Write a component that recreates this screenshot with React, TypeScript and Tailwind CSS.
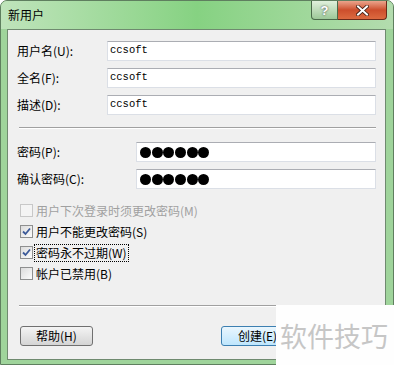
import React from 'react';

const cjk = { fontFamily: '"Noto Sans CJK SC", "Noto Sans", sans-serif' };
const mono = { fontFamily: '"Liberation Mono", "DejaVu Sans Mono", monospace' };

const TextRow: React.FC<{ label: string; value: string }> = ({ label, value }) => (
  <div className="flex items-center h-[20px]">
    <span className="w-[90px] text-[12px] text-black leading-none">{label}</span>
    <div className="flex-1 h-[20px] bg-white border border-[#dbdfe6] border-t-[#abadb3] flex items-center pl-[2px]">
      <span className="text-[10.5px] text-black" style={mono}>{value}</span>
    </div>
  </div>
);

const PassRow: React.FC<{ label: string }> = ({ label }) => (
  <div className="flex items-center h-[20px]">
    <span className="w-[119px] text-[12px] text-black leading-none">{label}</span>
    <div className="flex-1 h-[20px] bg-white border border-[#dbdfe6] border-t-[#abadb3] flex items-center pl-[3px] gap-[0.7px]">
      {[0, 1, 2, 3, 4, 5].map((i) => (
        <span key={i} className="w-[11px] h-[11px] rounded-full bg-black" />
      ))}
    </div>
  </div>
);

const Check: React.FC<{ label: string; checked?: boolean; disabled?: boolean; focus?: boolean }> = ({
  label,
  checked,
  disabled,
  focus,
}) => (
  <div className="flex items-center h-[21px] pl-[3px]">
    <div
      className={`w-[13px] h-[13px] border flex items-center justify-center ${
        disabled ? 'border-[#c8c8c8] bg-[#f4f4f4]' : 'border-[#8e8f8f] bg-gradient-to-br from-[#dcdcdc] to-[#fcfcfc]'
      }`}
    >
      {checked && (
        <svg width="9" height="9" viewBox="0 0 9 9">
          <path d="M1 4.5 L3.5 7 L8 1.5" stroke="#3c5a99" strokeWidth="1.8" fill="none" />
        </svg>
      )}
    </div>
    <span
      className={`ml-[2px] text-[12px] leading-none px-[1px] py-[2px] ${
        disabled ? 'text-[#a0a0a0]' : 'text-black'
      } ${focus ? 'outline outline-1 outline-dotted outline-black' : ''}`}
    >
      {label}
    </span>
  </div>
);

const Separator = () => (
  <div className="h-[2px] border-t border-[#a0a0a0] border-b border-b-white" />
);

export default function App() {
  return (
    <div className="relative w-[394px] h-[365px] bg-white overflow-hidden" style={cjk}>
      <div className="w-[394px] h-[365px] flex flex-col border border-[#5f7f5f] rounded-t-[7px] bg-[#9fd49b]">
        {/* Title bar */}
        <div className="h-[28px] flex items-start bg-gradient-to-r from-[#bfe4bb] via-[#86d282] to-[#b3dcae] rounded-t-[6px]">
          <span className="pl-[7px] pt-[5px] text-[12px] text-black">新用户</span>
          <div className="ml-auto mr-[6px] flex h-[19px]">
            <div className="w-[27px] h-[19px] border border-[#4a6a4a] border-t-0 rounded-bl-[4px] bg-gradient-to-b from-[#e0f0dc] to-[#9cc898] flex items-center justify-center">
              <span className="text-[13px] font-bold text-white leading-none" style={{ textShadow: '0 0 2px #333', fontFamily: 'Arial, "Liberation Sans", sans-serif' }}>?</span>
            </div>
            <div className="w-[49px] h-[19px] border border-[#6b2a1a] border-t-0 border-l-0 rounded-br-[4px] bg-gradient-to-b from-[#eaa48c] via-[#cc4e2c] to-[#dc6a40] flex items-center justify-center">
              <svg width="13" height="11" viewBox="0 0 13 11">
                <path d="M2 1.5 L11 9.5 M11 1.5 L2 9.5" stroke="#3a1a10" strokeWidth="3.6" strokeLinecap="square" />
                <path d="M2 1.5 L11 9.5 M11 1.5 L2 9.5" stroke="#ffffff" strokeWidth="2" strokeLinecap="square" />
              </svg>
            </div>
          </div>
        </div>

        {/* Client area */}
        <div className="ml-[6px] mr-[7px] mb-[4px] flex-1 border border-[#6f8a6f] bg-[#f0f0f0] px-[9px] flex flex-col">
          <div className="mt-[11px] flex flex-col gap-[7px]">
            <TextRow label="用户名(U):" value="ccsoft" />
            <TextRow label="全名(F):" value="ccsoft" />
            <TextRow label="描述(D):" value="ccsoft" />
          </div>
          <div className="mt-[12px] ml-[2px]">
            <Separator />
          </div>
          <div className="mt-[13px] flex flex-col gap-[7px]">
            <PassRow label="密码(P):" />
            <PassRow label="确认密码(C):" />
          </div>
          <div className="mt-[11px] flex flex-col">
            <Check label="用户下次登录时须更改密码(M)" disabled />
            <Check label="用户不能更改密码(S)" checked />
            <Check label="密码永不过期(W)" checked focus />
            <Check label="帐户已禁用(B)" />
          </div>
          <div className="mt-[21px] ml-[2px]">
            <Separator />
          </div>
          <div className="mt-[19px] flex items-center pl-[3px]">
            <button className="w-[73px] h-[20px] rounded-[3px] border border-[#707070] bg-gradient-to-b from-[#f4f4f4] to-[#d4d4d4] text-[12px] text-black leading-none">
              帮助(H)
            </button>
            <button className="ml-[128px] w-[73px] h-[20px] rounded-[3px] border border-[#3c7fb1] bg-gradient-to-b from-[#eaf6fd] to-[#bee6fd] text-[12px] text-black leading-none">
              创建(E)
            </button>
          </div>
        </div>
      </div>

      {/* Watermark */}
      <div className="absolute left-[276px] top-[305px] w-[118px] h-[60px] bg-[#fefefe] flex items-center pl-[4px]">
        <span className="text-[27px] text-[#c6c6c6] leading-none tracking-[0px]">软件技巧</span>
      </div>
    </div>
  );
}
